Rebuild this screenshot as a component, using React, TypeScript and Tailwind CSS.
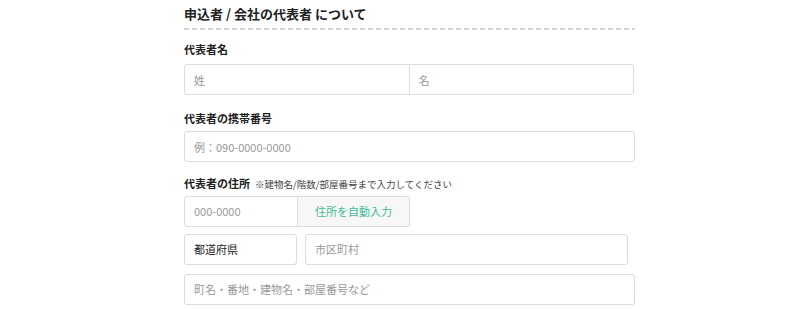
import React from 'react';

const font = { fontFamily: '"Noto Sans CJK JP", "Noto Sans", sans-serif' };

const inputBase =
  'h-[31px] border border-[#dcdcdc] bg-white px-[9px] text-[11px] text-[#333] placeholder:text-[#999] outline-none';

const Label = ({ children, note }: { children: React.ReactNode; note?: string }) => (
  <div className="flex items-baseline gap-[5px] leading-none">
    <span className="text-[11px] font-bold text-[#222]">{children}</span>
    {note && <span className="text-[9.5px] text-[#444]">{note}</span>}
  </div>
);

const App = () => {
  return (
    <div className="min-h-[309px] w-full bg-white" style={font}>
      <div className="ml-[184px] w-[451px] pt-[6px]">
        {/* Section heading */}
        <h2 className="text-[13px] font-bold leading-[16px] text-[#222]">
          申込者 / 会社の代表者 について
        </h2>
        <div className="mt-[6px] h-[2px] w-full bg-[linear-gradient(to_right,#d4d4d4_5px,transparent_5px)] bg-[length:8px_2px] bg-repeat-x" />

        {/* Name */}
        <div className="mt-[14px]">
          <Label>代表者名</Label>
          <div className="mt-[9px] flex">
            <input className={`${inputBase} w-1/2 rounded-l-[3px]`} placeholder="姓" />
            <input className={`${inputBase} -ml-px w-1/2 rounded-r-[3px]`} placeholder="名" />
          </div>
        </div>

        {/* Phone */}
        <div className="mt-[18px]">
          <Label>代表者の携帯番号</Label>
          <input
            className={`${inputBase} mt-[7px] w-full rounded-[3px]`}
            placeholder="例：090-0000-0000"
          />
        </div>

        {/* Address */}
        <div className="mt-[16px]">
          <Label note="※建物名/階数/部屋番号まで入力してください">代表者の住所</Label>
          <div className="mt-[6px] flex">
            <input
              className={`${inputBase} w-[114px] rounded-l-[3px]`}
              placeholder="000-0000"
            />
            <button className="-ml-px h-[31px] w-[113px] rounded-r-[3px] border border-[#dcdcdc] bg-[#f7f7f7] text-[11px] text-[#3dbb95]">
              住所を自動入力
            </button>
          </div>
          <div className="mt-[7px] flex gap-[8px] pr-[7px]">
            <div className="flex h-[31px] w-[113px] items-center rounded-[3px] border border-[#dcdcdc] px-[9px] text-[11px] text-[#222]">
              都道府県
            </div>
            <input className={`${inputBase} flex-1 rounded-[3px]`} placeholder="市区町村" />
          </div>
          <input
            className={`${inputBase} mt-[9px] w-full rounded-[3px]`}
            placeholder="町名・番地・建物名・部屋番号など"
          />
        </div>
      </div>
    </div>
  );
};

export default App;
